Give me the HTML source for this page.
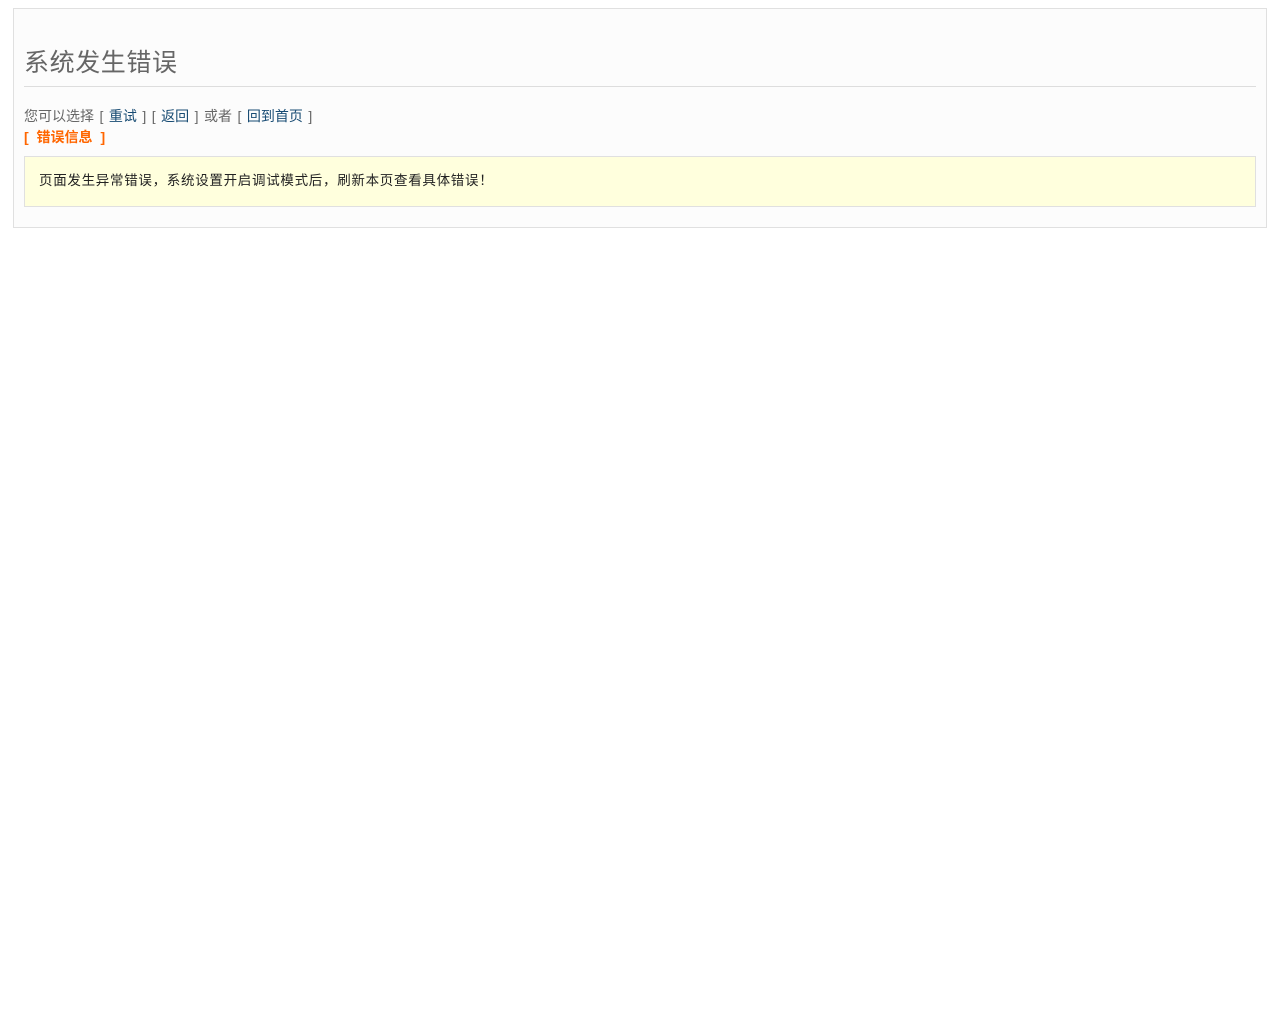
<!DOCTYPE html>
<html><head><meta charset="utf-8"><style>
body{margin:0;background:#fff;font-family:"Liberation Sans","Noto Sans CJK SC",sans-serif;font-size:14px;}
.notice{position:absolute;left:13px;top:8px;width:1252px;height:218px;background:#FCFCFC;border:1px solid #E0E0E0;color:#666;}
h2{position:absolute;left:10px;top:37px;width:1232px;margin:0;font-weight:normal;font-size:25px;letter-spacing:0.6px;line-height:34px;height:40px;border-bottom:1px solid #DDD;color:#666;}
.line{position:absolute;left:10px;top:97px;line-height:20px;white-space:nowrap;word-spacing:1.6px;}
a{color:#174B73;text-decoration:none;}
.title{position:absolute;left:10px;top:118px;line-height:20px;color:#F60;font-weight:bold;word-spacing:4px;}
.message{position:absolute;left:10px;top:147px;width:1202px;height:21px;padding:14px;background:#FFD;color:#222;border:1px solid #E0E0E0;line-height:20px;font-size:13.5px;letter-spacing:0.7px;}
</style></head><body>
<div class="notice">
<h2>系统发生错误</h2>
<div class="line">您可以选择 [ <a href="#">重试</a> ] [ <a href="#">返回</a> ] 或者 [ <a href="#">回到首页</a> ]</div>
<div class="title">[ 错误信息 ]</div>
<div class="message">页面发生异常错误，系统设置开启调试模式后，刷新本页查看具体错误！</div>
</div>
</body></html>
